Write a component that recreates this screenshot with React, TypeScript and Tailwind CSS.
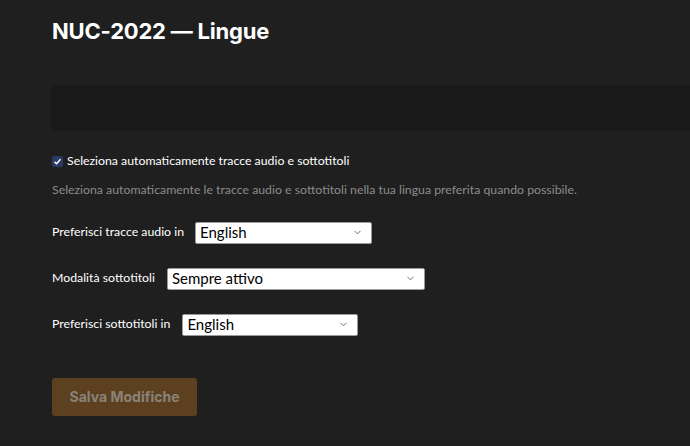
import { ChevronDown } from 'lucide-react';

function Select({ value, width }: { value: string; width: string }) {
  return (
    <div
      className={`${width} h-[22px] flex items-center justify-between bg-white border border-[#9a9a9a] rounded-[2px] pl-[4px] pr-[8px]`}
    >
      <span className="text-[15px] leading-none text-black">{value}</span>
      <ChevronDown className="w-[11px] h-[11px] text-[#333]" strokeWidth={1.5} />
    </div>
  );
}

export default function App() {
  return (
    <div
      className="w-[690px] h-[446px] overflow-hidden bg-[#1f1f1f] pl-[52px] pt-[18px]"
      style={{ fontFamily: 'Lato, "Noto Sans", sans-serif' }}
    >
      <h1
        className="text-[22px] leading-[26px] font-bold text-white tracking-[-0.2px]"
        style={{ fontFamily: 'Inter, "Liberation Sans", sans-serif' }}
      >
        NUC-2022 — Lingue
      </h1>

      <div className="mt-[41px] h-[46px] -ml-[1px] bg-[#1a1a1a]" />

      <label className="mt-[20px] flex items-center gap-[4px] text-[12.3px] leading-[20px] text-white">
        <span className="w-[11px] h-[11px] rounded-[2px] bg-[#2b3a63] flex items-center justify-center">
          <svg viewBox="0 0 12 12" className="w-[9px] h-[9px]">
            <path d="M2 6.5 L4.8 9 L10 3" fill="none" stroke="white" strokeWidth="2" />
          </svg>
        </span>
        Seleziona automaticamente tracce audio e sottotitoli
      </label>

      <p className="mt-[9px] text-[12.3px] leading-[19.5px] text-[#8c8c8c]">
        Seleziona automaticamente le tracce audio e sottotitoli nella tua lingua preferita quando possibile.
      </p>

      <div className="mt-[22px] flex items-center gap-[11px] text-[12.3px] text-white">
        <span>Preferisci tracce audio in</span>
        <Select value="English" width="w-[177px]" />
      </div>

      <div className="mt-[24px] flex items-center gap-[12px] text-[12.3px] text-white">
        <span>Modalità sottotitoli</span>
        <Select value="Sempre attivo" width="w-[258px]" />
      </div>

      <div className="mt-[24px] flex items-center gap-[12px] text-[12.3px] text-white">
        <span>Preferisci sottotitoli in</span>
        <Select value="English" width="w-[176px]" />
      </div>

      <button
        className="mt-[42px] w-[145px] h-[38px] rounded-[3px] bg-[#5c4020] text-[14px] font-bold text-[#8a8378]"
        style={{ fontFamily: 'Inter, "Liberation Sans", sans-serif' }}
      >
        Salva Modifiche
      </button>
    </div>
  );
}
